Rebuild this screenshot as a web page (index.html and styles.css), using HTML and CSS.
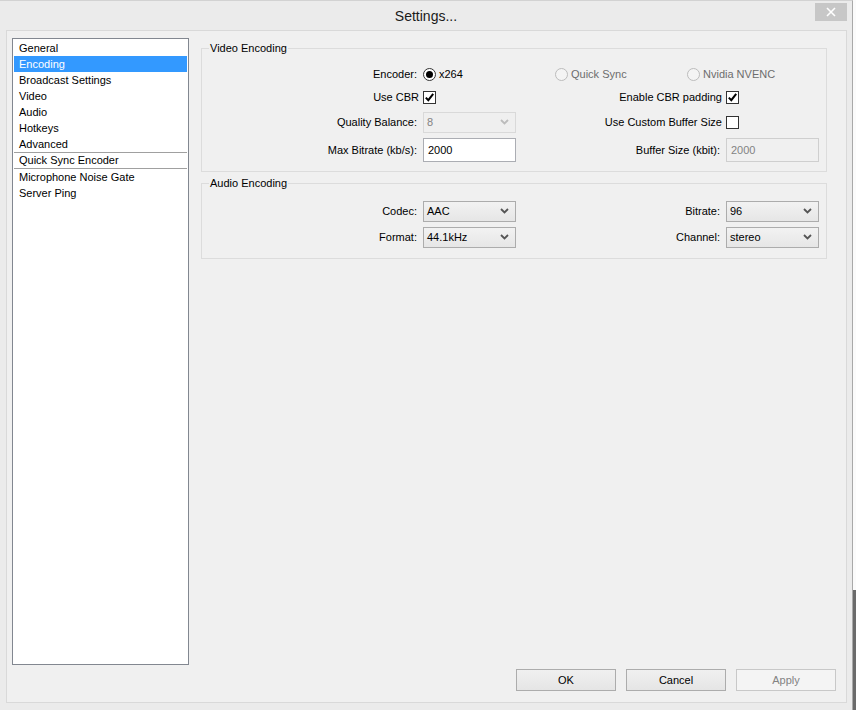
FILE: index.html
```html
<!DOCTYPE html>
<html lang="en">
<head>
    <meta charset="UTF-8">
    <title>Settings...</title>
    <link rel="stylesheet" href="styles.css">
</head>
<body>
    <div class="screen">
        <div class="window">
            <div class="titlebar">
                <span class="title">Settings...</span>
                <button class="close-btn" aria-label="Close">
                    <svg width="10" height="10" viewBox="0 0 10 10"><path d="M1 1 L9 9 M9 1 L1 9" stroke="#fff" stroke-width="1.6" fill="none"/></svg>
                </button>
            </div>

            <div class="client">
                <ul class="nav-list">
                    <li>General</li>
                    <li class="selected">Encoding</li>
                    <li>Broadcast Settings</li>
                    <li>Video</li>
                    <li>Audio</li>
                    <li>Hotkeys</li>
                    <li>Advanced</li>
                    <li class="boxed">Quick Sync Encoder</li>
                    <li>Microphone Noise Gate</li>
                    <li>Server Ping</li>
                </ul>

                <div class="pane">
                    <fieldset class="group video-group">
                        <legend>Video Encoding</legend>
                        <div class="form-grid video-grid">
                            <span class="label">Encoder:</span>
                            <div class="radios">
                                <label class="radio-item"><span class="radio checked"></span>x264</label>
                                <label class="radio-item disabled"><span class="radio"></span>Quick Sync</label>
                                <label class="radio-item disabled"><span class="radio"></span>Nvidia NVENC</label>
                            </div>

                            <span class="label check-label">Use CBR</span>
                            <span class="check checked">
                                <svg width="11" height="11" viewBox="0 0 11 11"><path d="M1.8 5.6 L4.3 8.2 L9.2 1.8" stroke="#000" stroke-width="2" fill="none"/></svg>
                            </span>
                            <span class="label check-label">Enable CBR padding</span>
                            <span class="check checked">
                                <svg width="11" height="11" viewBox="0 0 11 11"><path d="M1.8 5.6 L4.3 8.2 L9.2 1.8" stroke="#000" stroke-width="2" fill="none"/></svg>
                            </span>

                            <span class="label">Quality Balance:</span>
                            <div class="combo disabled">
                                <span>8</span>
                                <svg width="9" height="6" viewBox="0 0 9 6"><path d="M1 1 L4.5 4.5 L8 1" stroke="#bcbcbc" stroke-width="1.8" fill="none"/></svg>
                            </div>
                            <span class="label check-label">Use Custom Buffer Size</span>
                            <span class="check"></span>

                            <span class="label">Max Bitrate (kb/s):</span>
                            <div class="textbox">2000</div>
                            <span class="label">Buffer Size (kbit):</span>
                            <div class="textbox disabled">2000</div>
                        </div>
                    </fieldset>

                    <fieldset class="group audio-group">
                        <legend>Audio Encoding</legend>
                        <div class="form-grid audio-grid">
                            <span class="label">Codec:</span>
                            <div class="combo">
                                <span>AAC</span>
                                <svg width="9" height="6" viewBox="0 0 9 6"><path d="M1 1 L4.5 4.5 L8 1" stroke="#555" stroke-width="1.8" fill="none"/></svg>
                            </div>
                            <span class="label">Bitrate:</span>
                            <div class="combo">
                                <span>96</span>
                                <svg width="9" height="6" viewBox="0 0 9 6"><path d="M1 1 L4.5 4.5 L8 1" stroke="#555" stroke-width="1.8" fill="none"/></svg>
                            </div>

                            <span class="label">Format:</span>
                            <div class="combo">
                                <span>44.1kHz</span>
                                <svg width="9" height="6" viewBox="0 0 9 6"><path d="M1 1 L4.5 4.5 L8 1" stroke="#555" stroke-width="1.8" fill="none"/></svg>
                            </div>
                            <span class="label">Channel:</span>
                            <div class="combo">
                                <span>stereo</span>
                                <svg width="9" height="6" viewBox="0 0 9 6"><path d="M1 1 L4.5 4.5 L8 1" stroke="#555" stroke-width="1.8" fill="none"/></svg>
                            </div>
                        </div>
                    </fieldset>

                    <div class="buttons">
                        <button class="btn">OK</button>
                        <button class="btn">Cancel</button>
                        <button class="btn disabled">Apply</button>
                    </div>
                </div>
            </div>
        </div>
        <div class="backdrop"></div>
    </div>
</body>
</html>
```

FILE: styles.css
```css
body {
    margin: 0;
    font-family: "Liberation Sans", Arial, sans-serif;
    font-size: 11px;
    color: #000;
    background-color: #ebebeb;
}
.screen {
    display: flex;
    width: 856px;
    height: 710px;
    overflow: hidden;
}
.window {
    width: 853px;
    height: 710px;
    flex: none;
    background-color: #ebebeb;
    border-top: 1px solid #d2d2d2;
    border-right: 1px solid #a9a9a9;
    box-sizing: border-box;
    display: flex;
    flex-direction: column;
}
.backdrop {
    flex: 1;
    background: linear-gradient(#fbfbfb 0 590px, #6b6b6b 590px);
}
.titlebar {
    position: relative;
    height: 29px;
    display: flex;
    align-items: center;
    justify-content: center;
}
.title {
    font-size: 14px;
    color: #1a1a1a;
    margin-top: 1px;
}
.close-btn {
    position: absolute;
    top: 2px;
    right: 5px;
    width: 32px;
    height: 18px;
    padding: 0;
    border: none;
    background-color: #c7c7c7;
    display: flex;
    align-items: center;
    justify-content: center;
}
.client {
    margin: 0 5px 7px 6px;
    height: 673px;
    box-sizing: border-box;
    border: 1px solid #d9d9d9;
    background-color: #f0f0f0;
    display: flex;
    padding: 0 10px 0 5px;
}
.nav-list {
    list-style: none;
    margin: 7px 0 0 0;
    padding: 1px;
    width: 177px;
    height: 627px;
    box-sizing: border-box;
    border: 1px solid #828790;
    background-color: #fff;
    flex: none;
}
.nav-list li {
    height: 16px;
    line-height: 16px;
    padding-left: 5px;
    white-space: nowrap;
}
.nav-list li.selected {
    background-color: #3399ff;
    color: #fff;
}
.nav-list li.boxed {
    height: 15px;
    line-height: 15px;
    border-top: 1px solid #a0a0a0;
    border-bottom: 1px solid #a0a0a0;
}
.pane {
    margin-left: 12px;
    width: 635px;
    height: 660px;
    display: flex;
    flex-direction: column;
}
.group {
    margin: 0 9px 0 0;
    padding: 8px 7px 7px 0;
    min-width: 0;
    border: 1px solid #dcdcdc;
}
.video-group {
    margin-top: 10px;
}
.audio-group {
    margin-top: 4px;
    padding-bottom: 8px;
}
.group legend {
    margin-left: 7px;
    padding: 0 1px;
    line-height: 14px;
}
.form-grid {
    display: grid;
    grid-template-columns: 221px 93px 210px 93px;
    align-items: center;
}
.video-grid {
    grid-template-rows: 22px 24px 26px 29px;
}
.audio-grid {
    grid-template-rows: 26px 26px;
}
.label {
    text-align: right;
    padding-right: 6px;
    white-space: nowrap;
}
.label.check-label {
    padding-right: 4px;
}
.radios {
    grid-column: 2 / 5;
    display: flex;
}
.radio-item {
    width: 132px;
    display: flex;
    align-items: center;
    white-space: nowrap;
}
.radio-item.disabled {
    color: #6d6d6d;
}
.radio {
    width: 13px;
    height: 13px;
    box-sizing: border-box;
    border: 1px solid #333;
    border-radius: 50%;
    background-color: #fff;
    margin-right: 3px;
    display: flex;
    align-items: center;
    justify-content: center;
}
.radio.checked::after {
    content: "";
    width: 7px;
    height: 7px;
    border-radius: 50%;
    background-color: #000;
}
.radio-item.disabled .radio {
    border-color: #bcbcbc;
    background-color: #f4f4f4;
}
.check {
    width: 13px;
    height: 13px;
    box-sizing: border-box;
    border: 1px solid #333;
    background-color: #fff;
    display: flex;
    align-items: center;
    justify-content: center;
}
.combo {
    height: 21px;
    box-sizing: border-box;
    border: 1px solid #acacac;
    background: linear-gradient(#f2f2f2, #e6e6e6);
    display: flex;
    align-items: center;
    justify-content: space-between;
    padding: 0 6px 0 3px;
}
.combo.disabled {
    border-color: #d9d9d9;
    background: #efefef;
    color: #838383;
}
.textbox {
    height: 24px;
    box-sizing: border-box;
    border: 1px solid #abadb3;
    background-color: #fff;
    padding-left: 4px;
    display: flex;
    align-items: center;
}
.textbox.disabled {
    border-color: #cfcfcf;
    background-color: #f0f0f0;
    color: #838383;
}
.buttons {
    margin-top: auto;
    display: flex;
    justify-content: flex-end;
    gap: 10px;
}
.btn {
    width: 100px;
    height: 22px;
    padding: 0;
    font-family: inherit;
    font-size: 11px;
    color: #000;
    border: 1px solid #acacac;
    background: linear-gradient(#f0f0f0, #e5e5e5);
}
.btn.disabled {
    border-color: #c8c8c8;
    background: #f4f4f4;
    color: #838383;
}
```
